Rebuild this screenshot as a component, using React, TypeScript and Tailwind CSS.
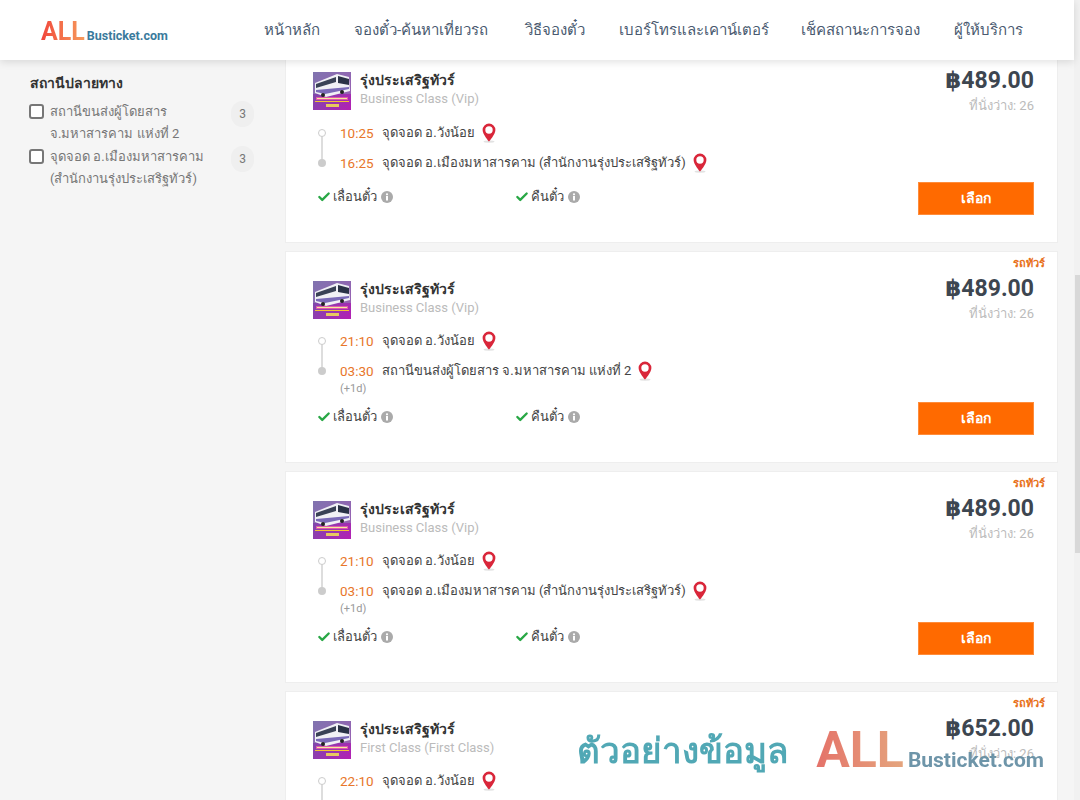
import { Check } from 'lucide-react'

const navItems = [
  { label: 'หน้าหลัก', width: 'w-[58px]' },
  { label: 'จองตั๋ว-ค้นหาเที่ยวรถ', width: 'w-[139px]' },
  { label: 'วิธีจองตั๋ว', width: 'w-[62px]' },
  { label: 'เบอร์โทรและเคาน์เตอร์', width: 'w-[150px]' },
  { label: 'เช็คสถานะการจอง', width: 'w-[121px]' },
  { label: 'ผู้ให้บริการ', width: 'w-[68px]' },
]

const trips = [
  { from: '10:25', to: '16:25', dest: 'จุดจอด อ.เมืองมหาสารคาม (สำนักงานรุ่งประเสริฐทัวร์)', price: '489.00', cls: 'Business Class (Vip)', nextDay: false, top: false },
  { from: '21:10', to: '03:30', dest: 'สถานีขนส่งผู้โดยสาร จ.มหาสารคาม แห่งที่ 2', price: '489.00', cls: 'Business Class (Vip)', nextDay: true, top: true },
  { from: '21:10', to: '03:10', dest: 'จุดจอด อ.เมืองมหาสารคาม (สำนักงานรุ่งประเสริฐทัวร์)', price: '489.00', cls: 'Business Class (Vip)', nextDay: true, top: true },
  { from: '22:10', to: '', dest: '', price: '652.00', cls: 'First Class (First Class)', nextDay: false, top: true },
]

function Pin() {
  return (
    <svg width="14" height="20" viewBox="0 0 14 20" className="shrink-0">
      <ellipse cx="7" cy="18.6" rx="5.5" ry="1.2" fill="#e2e2e2" />
      <path d="M7 .6A6.4 6.4 0 0 0 .6 7c0 4.4 6.4 11.6 6.4 11.6S13.4 11.4 13.4 7A6.4 6.4 0 0 0 7 .6zm0 10.1a3.7 3.7 0 1 1 0-7.4 3.7 3.7 0 0 1 0 7.4z" fill="#d9263a" />
    </svg>
  )
}

function BusLogo() {
  return (
    <svg width="38" height="38" viewBox="0 0 38 38" className="shrink-0">
      <defs>
        <linearGradient id="busbg" x1="0" y1="0" x2="1" y2="1">
          <stop offset="0" stopColor="#6a5aa8" />
          <stop offset="1" stopColor="#b41fb4" />
        </linearGradient>
      </defs>
      <rect width="38" height="38" fill="url(#busbg)" />
      <path d="M0 0H38V22H0z" fill="#8f86b4" opacity="0.6" />
      <path d="M2 11 L24 2 L36 5 L37 19 L13 25 L2 21z" fill="#f0f0f5" />
      <path d="M3 12 L23 5 L23 10 L3 16z" fill="#3a4256" />
      <path d="M25 4 L36 7 L36 13 L25 11z" fill="#2a3246" />
      <path d="M3 18 L36 15 L36 17 L12 22 L3 20z" fill="#7a6ab8" />
      <circle cx="10" cy="23" r="2" fill="#222" />
      <circle cx="29" cy="20" r="2" fill="#222" />
      <rect x="3" y="25" width="32" height="3" fill="#e05aa8" />
      <rect x="4" y="26" width="30" height="1" fill="#f4e8a0" />
      <rect x="2" y="29" width="34" height="1" fill="#f4c430" />
      <rect x="13" y="32" width="13" height="3" fill="#e8c860" />
    </svg>
  )
}

function Policy({ label }: { label: string }) {
  return (
    <div className="flex w-[198px] items-center">
      <Check className="h-[14px] w-[14px] text-[#28a745]" strokeWidth={4} />
      <span className="ml-[2px] text-[13px] leading-5 text-[#444]">{label}</span>
      <svg width="12" height="12" viewBox="0 0 12 12" className="ml-[4px]">
        <circle cx="6" cy="6" r="6" fill="#aaa" />
        <rect x="5" y="5" width="2" height="4.5" fill="#fff" />
        <circle cx="6" cy="3.3" r="1.1" fill="#fff" />
      </svg>
    </div>
  )
}

function TripCard({ trip, first }: { trip: (typeof trips)[number]; first: boolean }) {
  return (
    <div className={`relative mr-[22px] shrink-0 border border-[#eee] bg-white pl-[27px] pr-[23px] ${first ? 'h-[183px] border-t-0 pt-[12px]' : 'h-[212px] pt-[29px]'}`}>
      {trip.top && <div className="absolute right-[12px] top-[4px] text-[11px] leading-4 font-bold text-[#e8701a]">รถทัวร์</div>}
      <div className="flex items-start justify-between">
        <div className="flex items-center gap-[9px]">
          <BusLogo />
          <div className="-mt-[3px]">
            <div className="text-[14px] leading-[19px] font-bold text-[#333]">รุ่งประเสริฐทัวร์</div>
            <div className="text-[13px] leading-[18px] text-[#bbb]">{trip.cls}</div>
          </div>
        </div>
        <div className={`text-right ${first ? '-mt-[8px]' : '-mt-[9px]'}`}>
          <div className="text-[23px] leading-[33px] font-bold text-[#3d4650]">฿{trip.price}</div>
          <div className="text-[13px] leading-[17px] text-[#bbb]">ที่นั่งว่าง: 26</div>
        </div>
      </div>
      <div className="relative mt-[9px] pl-[27px]">
        <div className="absolute left-[8px] top-[10px] h-[31px] w-[2px] bg-[#ddd]" />
        <div className="absolute left-[5px] top-[6px] h-[8px] w-[8px] rounded-full border border-[#ccc] bg-white" />
        <div className="absolute left-[5px] top-[36px] h-[8px] w-[8px] rounded-full bg-[#ccc]" />
        <div className="flex h-[20px] items-center text-[13px] text-[#444]">
          <span className="w-[42px] text-[13.5px] text-[#e8762a]">{trip.from}</span>
          <span className="mr-[7px]">จุดจอด อ.วังน้อย</span>
          <Pin />
        </div>
        <div className="mt-[10px] flex h-[20px] items-center text-[13px] text-[#444]">
          <span className="w-[42px] text-[13.5px] text-[#e8762a]">{trip.to}</span>
          <span className="mr-[7px]">{trip.dest}</span>
          <Pin />
        </div>
        {trip.nextDay && <div className="mt-[2px] h-[12px] text-[11px] leading-[12px] text-[#999]">(+1d)</div>}
      </div>
      <div className={`flex items-center justify-between ${trip.nextDay ? 'mt-[7px]' : 'mt-[9px]'}`}>
        <div className="flex pb-[3px] pl-[4px]">
          <Policy label="เลื่อนตั๋ว" />
          <Policy label="คืนตั๋ว" />
        </div>
        <button className="h-[33px] w-[116px] border border-[#ff8c3a] bg-[#ff6a00] text-[14px] font-bold text-white">เลือก</button>
      </div>
    </div>
  )
}

function FilterRow({ lines }: { lines: string[] }) {
  return (
    <div className="flex">
      <div className="mt-[3px] h-[15px] w-[15px] shrink-0 rounded-[3px] border-2 border-[#777] bg-white" />
      <div className="ml-[6px] w-[181px] text-[13px] leading-[22px] text-[#777]">
        {lines.map((l) => (
          <div key={l}>{l}</div>
        ))}
      </div>
      <div className="flex h-[26px] w-[23px] items-center justify-center rounded-full bg-[#efefef] text-[12px] text-[#777]">3</div>
    </div>
  )
}

export default function App() {
  return (
    <div className="relative flex h-[800px] w-[1080px] flex-col overflow-hidden bg-[#f5f5f5] font-['Roboto','Noto_Sans','DejaVu_Sans',sans-serif]">
      <div className="pointer-events-none absolute right-0 top-0 h-full w-[6px] bg-[#f1f1f1]">
        <div className="ml-[1px] mt-[275px] h-[278px] w-[5px] bg-[#d8d8d8]" />
      </div>
      <header className="relative z-10 flex h-[60px] w-[1074px] shrink-0 items-center bg-white pl-[41px] pr-[52px] shadow-[0_2px_8px_rgba(0,0,0,0.12)]">
        <div className="flex items-baseline pt-[4px]">
          <span className="bg-gradient-to-r from-[#f0443c] to-[#f59a5c] bg-clip-text text-[25px] leading-none font-bold text-transparent">ALL</span>
          <span className="ml-[2px] text-[12.5px] font-bold text-[#3a7a9c]">Busticket.com</span>
        </div>
        <nav className="ml-auto flex gap-[32px]">
          {navItems.map((n) => (
            <span key={n.label} className={`whitespace-nowrap text-[15px] text-[#4a5a70] ${n.width}`}>{n.label}</span>
          ))}
        </nav>
      </header>
      <div className="flex min-h-0 flex-1">
        <aside className="w-[285px] shrink-0 pl-[29px] pt-[12px]">
          <div className="ml-[1px] text-[14px] leading-[22px] font-bold text-[#333]">สถานีปลายทาง</div>
          <div className="mt-[7px] flex flex-col gap-[1px]">
            <FilterRow lines={['สถานีขนส่งผู้โดยสาร', 'จ.มหาสารคาม แห่งที่ 2']} />
            <FilterRow lines={['จุดจอด อ.เมืองมหาสารคาม', '(สำนักงานรุ่งประเสริฐทัวร์)']} />
          </div>
        </aside>
        <main className="flex flex-1 flex-col gap-[8px]">
          {trips.map((t, i) => (
            <TripCard key={i} trip={t} first={i === 0} />
          ))}
        </main>
      </div>
      <div className="absolute bottom-[18px] right-[36px] flex items-baseline opacity-90">
        <span className="mr-[28px] -translate-y-[4px] text-[35px] font-bold text-[#3f9fad]">ตัวอย่างข้อมูล</span>
        <span className="bg-gradient-to-r from-[#e2635a] to-[#e29c70] bg-clip-text text-[50px] leading-none font-bold text-transparent">ALL</span>
        <span className="ml-[4px] text-[21px] font-bold text-[#5f8aa0]">Busticket.com</span>
      </div>
    </div>
  )
}
